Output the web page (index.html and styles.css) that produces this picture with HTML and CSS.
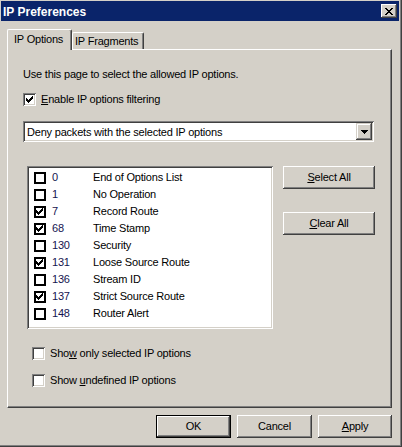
FILE: index.html
```html
<!DOCTYPE html>
<html>
<head>
<meta charset="utf-8">
<title>IP Preferences</title>
<link rel="stylesheet" href="styles.css">
</head>
<body>
<div class="window">
  <div class="titlebar">
    <span class="title">IP Preferences</span>
    <span class="close"><svg width="8" height="7" viewBox="0 0 8 7" shape-rendering="crispEdges"><path d="M0 0h2v1h-2zM6 0h2v1h-2zM1 1h2v1h-2zM5 1h2v1h-2zM2 2h4v1h-4zM3 3h2v1h-2zM2 4h4v1h-4zM1 5h2v1h-2zM5 5h2v1h-2zM0 6h2v1h-2zM6 6h2v1h-2z" fill="#000"/></svg></span>
  </div>
  <div class="content">
    <div class="tabs">
      <div class="tab active">IP Options</div>
      <div class="tab fragments">IP Fragments</div>
    </div>
    <div class="panel">
      <p class="desc">Use this page to select the allowed IP options.</p>
      <div class="check-row enable">
        <span class="cb"><svg class="tick" width="7" height="7" viewBox="0 0 7 7" shape-rendering="crispEdges"><path d="M6 0h1v1h-1zM5 1h2v1h-2zM0 2h1v1h-1zM4 2h3v1h-3zM0 3h2v1h-2zM3 3h3v1h-3zM0 4h5v1h-5zM1 5h3v1h-3zM2 6h1v1h-1z" fill="#000"/></svg></span>
        <span class="label"><u>E</u>nable IP options filtering</span>
      </div>
      <div class="select">
        <span class="select-text">Deny packets with the selected IP options</span>
        <span class="arrow"><svg width="7" height="4" viewBox="0 0 7 4" shape-rendering="crispEdges"><path d="M0 0h7v1h-7zM1 1h5v1h-5zM2 2h3v1h-3zM3 3h1v1h-1z" fill="#000"/></svg></span>
      </div>
      <div class="list-area">
        <div class="list">
          <div class="row"><span class="lcb"></span><span class="num">0</span><span class="name">End of Options List</span></div>
          <div class="row"><span class="lcb"></span><span class="num">1</span><span class="name">No Operation</span></div>
          <div class="row"><span class="lcb"><svg width="7" height="7" viewBox="0 0 7 7" shape-rendering="crispEdges"><path d="M6 0h1v1h-1zM5 1h2v1h-2zM0 2h1v1h-1zM4 2h3v1h-3zM0 3h2v1h-2zM3 3h3v1h-3zM0 4h5v1h-5zM1 5h3v1h-3zM2 6h1v1h-1z" fill="#000"/></svg></span><span class="num">7</span><span class="name">Record Route</span></div>
          <div class="row"><span class="lcb"><svg width="7" height="7" viewBox="0 0 7 7" shape-rendering="crispEdges"><path d="M6 0h1v1h-1zM5 1h2v1h-2zM0 2h1v1h-1zM4 2h3v1h-3zM0 3h2v1h-2zM3 3h3v1h-3zM0 4h5v1h-5zM1 5h3v1h-3zM2 6h1v1h-1z" fill="#000"/></svg></span><span class="num">68</span><span class="name">Time Stamp</span></div>
          <div class="row"><span class="lcb"></span><span class="num">130</span><span class="name">Security</span></div>
          <div class="row"><span class="lcb"><svg width="7" height="7" viewBox="0 0 7 7" shape-rendering="crispEdges"><path d="M6 0h1v1h-1zM5 1h2v1h-2zM0 2h1v1h-1zM4 2h3v1h-3zM0 3h2v1h-2zM3 3h3v1h-3zM0 4h5v1h-5zM1 5h3v1h-3zM2 6h1v1h-1z" fill="#000"/></svg></span><span class="num">131</span><span class="name">Loose Source Route</span></div>
          <div class="row"><span class="lcb"></span><span class="num">136</span><span class="name">Stream ID</span></div>
          <div class="row"><span class="lcb"><svg width="7" height="7" viewBox="0 0 7 7" shape-rendering="crispEdges"><path d="M6 0h1v1h-1zM5 1h2v1h-2zM0 2h1v1h-1zM4 2h3v1h-3zM0 3h2v1h-2zM3 3h3v1h-3zM0 4h5v1h-5zM1 5h3v1h-3zM2 6h1v1h-1z" fill="#000"/></svg></span><span class="num">137</span><span class="name">Strict Source Route</span></div>
          <div class="row"><span class="lcb"></span><span class="num">148</span><span class="name">Router Alert</span></div>
        </div>
        <div class="side-buttons">
          <span class="btn side"><span><u>S</u>elect All</span></span>
          <span class="btn side"><span><u>C</u>lear All</span></span>
        </div>
      </div>
      <div class="check-row bottom first">
        <span class="cb"></span>
        <span class="label">Sho<u>w</u> only selected IP options</span>
      </div>
      <div class="check-row bottom second">
        <span class="cb"></span>
        <span class="label">Show <u>u</u>ndefined IP options</span>
      </div>
    </div>
    <div class="footer">
      <span class="btn default">OK</span>
      <span class="btn">Cancel</span>
      <span class="btn apply"><span><u>A</u>pply</span></span>
    </div>
  </div>
</div>
</body>
</html>
```

FILE: styles.css
```css
* {
  box-sizing: border-box;
}

html,
body {
  margin: 0;
  padding: 0;
}

body {
  width: 402px;
  height: 447px;
  overflow: hidden;
  background: #d4d0c8;
  font-family: "Liberation Sans", Arial, sans-serif;
  font-size: 11px;
  letter-spacing: -0.2px;
  color: #000;
}

.window {
  width: 402px;
  height: 447px;
  padding: 1px 0 0 1px;
  background: #d4d0c8;
  box-shadow: inset -1px -1px #404040, inset -2px -2px #808080;
  display: flex;
  flex-direction: column;
}

.titlebar {
  width: 398px;
  height: 20px;
  flex: none;
  display: flex;
  padding: 2px 2px 0 2px;
  background: #0a246a;
  color: #fff;
}

.title {
  flex: 1;
  font-weight: bold;
  font-size: 12px;
  line-height: 18px;
  letter-spacing: 0;
}

.close {
  width: 16px;
  height: 14px;
  margin-top: 1px;
  display: flex;
  align-items: center;
  justify-content: center;
  background: #d4d0c8;
  box-shadow: inset -1px -1px #404040, inset 1px 1px #fff, inset -2px -2px #808080;
}

.close svg {
  display: block;
}

.content {
  padding: 8px 10px 0 6px;
  display: flex;
  flex-direction: column;
}

.tabs {
  display: flex;
  align-items: flex-end;
  height: 21px;
  margin-bottom: -1px;
}

.tab {
  height: 18px;
  padding: 2px 0 0 2px;
  border: 1px solid;
  border-color: #fff #404040 transparent #fff;
  border-bottom: none;
  border-radius: 2px 2px 0 0;
  box-shadow: inset -1px 0 #808080;
  background: #d4d0c8;
  line-height: 13px;
  white-space: nowrap;
}

.tab.active {
  width: 65px;
  height: 21px;
  padding: 3px 0 0 6px;
  position: relative;
  z-index: 1;
}

.tab.fragments {
  width: 72px;
}

.panel {
  height: 359px;
  border: 1px solid;
  border-color: #fff #404040 #404040 #fff;
  box-shadow: inset -1px -1px #808080;
  padding: 0 0 0 15px;
  display: flex;
  flex-direction: column;
  align-items: flex-start;
}

.desc {
  margin: 18px 0 0 0;
  line-height: 13px;
}

.check-row {
  display: flex;
  align-items: center;
  height: 13px;
  line-height: 13px;
}

.check-row .label {
  margin-left: 5px;
  white-space: nowrap;
}

.check-row.enable {
  margin-top: 12px;
}

.check-row.bottom.first {
  margin-top: 18px;
  margin-left: 9px;
}

.check-row.bottom.second {
  margin-top: 14px;
  margin-left: 9px;
}

.cb {
  width: 13px;
  height: 13px;
  flex: none;
  display: flex;
  align-items: center;
  justify-content: center;
  background: #fff;
  box-shadow: inset 1px 1px #808080, inset -1px -1px #fff, inset 2px 2px #404040, inset -2px -2px #d4d0c8;
}

.cb svg {
  display: block;
}

.select {
  margin-top: 15px;
  width: 351px;
  height: 21px;
  padding: 2px;
  display: flex;
  background: #fff;
  box-shadow: inset 1px 1px #808080, inset -1px -1px #fff, inset 2px 2px #404040, inset -2px -2px #d4d0c8;
}

.select-text {
  flex: 1;
  padding: 1px 0 0 2px;
  line-height: 16px;
  white-space: nowrap;
}

.arrow {
  width: 16px;
  height: 17px;
  flex: none;
  display: flex;
  align-items: center;
  justify-content: center;
  padding: 1px 0 0 0;
  background: #d4d0c8;
  box-shadow: inset -1px -1px #404040, inset 1px 1px #d4d0c8, inset -2px -2px #808080, inset 2px 2px #fff;
}

.arrow svg {
  display: block;
}

.list-area {
  margin-top: 24px;
  display: flex;
  align-items: flex-start;
}

.list {
  margin-left: 4px;
  width: 246px;
  height: 163px;
  padding: 3px 2px 2px 2px;
  background: #fff;
  box-shadow: inset 1px 1px #808080, inset -1px -1px #fff, inset 2px 2px #404040, inset -2px -2px #d4d0c8;
}

.row {
  height: 17px;
  display: flex;
  align-items: center;
  line-height: 17px;
  white-space: nowrap;
}

.lcb {
  width: 12px;
  height: 12px;
  flex: none;
  margin-left: 5px;
  border: 2px solid #000;
  background: #fff;
  padding: 0;
}

.lcb svg {
  display: block;
}

.num {
  width: 41px;
  margin-left: 6px;
  color: #141450;
}

.name {
  color: #000;
}

.side-buttons {
  margin-left: 10px;
  display: flex;
  flex-direction: column;
  gap: 23px;
}

.btn {
  width: 75px;
  height: 23px;
  flex: none;
  display: flex;
  align-items: center;
  justify-content: center;
  line-height: 13px;
  background: #d4d0c8;
  box-shadow: inset -1px -1px #404040, inset 1px 1px #fff, inset -2px -2px #808080, inset 2px 2px #d4d0c8;
  white-space: nowrap;
}

.btn.side {
  width: 92px;
}

.btn.default {
  box-shadow: inset 0 0 0 1px #000, inset -2px -2px #404040, inset 2px 2px #fff, inset -3px -3px #808080;
}

.btn.apply {
  width: 74px;
}

.footer {
  margin-top: 7px;
  display: flex;
  justify-content: flex-end;
  gap: 6px;
}
```
